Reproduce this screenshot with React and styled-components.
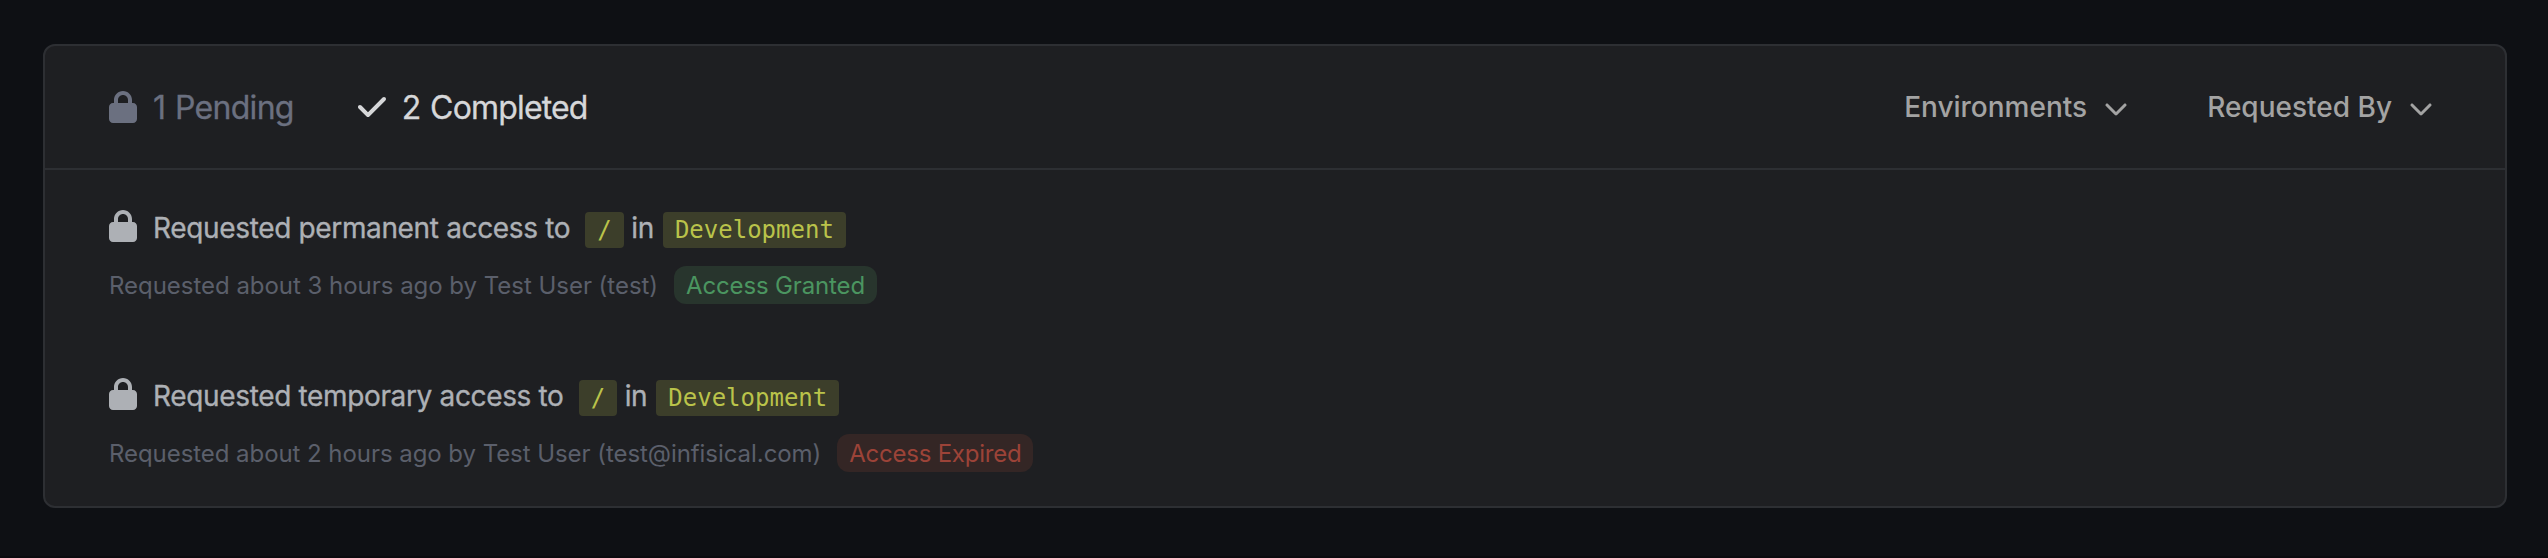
import React from "react";
import styled, { createGlobalStyle } from "styled-components";
import { FaLock, FaCheck, FaChevronDown } from "react-icons/fa6";

const GlobalStyle = createGlobalStyle`
  *, *::before, *::after { box-sizing: border-box; }
  body {
    margin: 0;
    background: #0e1014;
    font-family: Inter, "Liberation Sans", sans-serif;
  }
`;

const Page = styled.main`
  height: 558px;
  padding: 44px 41px 48px 43px;
  border-bottom: 2px solid #0b0b0f;
`;

const Card = styled.section`
  height: 464px;
  border: 2px solid #2d2f33;
  border-radius: 12px;
  background: #1e1f22;
  overflow: hidden;
`;

const Header = styled.header`
  display: flex;
  align-items: center;
  height: 124px;
  padding: 0 72px 0 64px;
  border-bottom: 2px solid #2d2f33;
`;

const Tab = styled.button`
  display: flex;
  align-items: center;
  gap: 16px;
  margin: 0 64px 0 0;
  padding: 0;
  border: 0;
  background: none;
  font: 400 32px/47px Inter, "Liberation Sans", sans-serif;
  letter-spacing: ${(p) => p.$tracking};
  word-spacing: 1.5px;
  white-space: nowrap;
  color: ${(p) => (p.$active ? "#d6d7d9" : "#6b7080")};
  svg { width: 28px; height: 32px; flex: none; }
  span { padding-top: 1px; -webkit-text-stroke: 0.3px currentColor; }
`;

const Filters = styled.div`
  display: flex;
  gap: 79px;
  margin-left: auto;
`;

const Filter = styled.button`
  display: flex;
  align-items: center;
  gap: 17px;
  padding: 0;
  border: 0;
  background: none;
  font: 500 28px/40px Inter, "Liberation Sans", sans-serif;
  white-space: nowrap;
  color: #a3a3a3;
  svg { width: 24px; height: 24px; flex: none; margin-top: 1px; }
`;

const List = styled.ul`
  margin: 0;
  padding: 0;
  list-style: none;
`;

const Request = styled.li`
  height: 168px;
  padding: 38px 64px 0;
`;

const Title = styled.div`
  display: flex;
  align-items: center;
  height: 40px;
  font-size: 28px;
  line-height: 40px;
  letter-spacing: -0.35px;
  white-space: nowrap;
  color: #adb0b5;
  svg { width: 28px; height: 32px; flex: none; margin: 0 16px 4px 0; }
  span { -webkit-text-stroke: 0.35px currentColor; }
`;

const Chip = styled.code`
  height: 36px;
  margin: 4px 7.5px 0 ${(p) => (p.$path ? "15.2px" : "9px")};
  padding: 0 12px;
  border-radius: 4px;
  background: #3c3e2a;
  color: #bac34a;
  font: 400 24px/36px "DejaVu Sans Mono", monospace;
  letter-spacing: 0;
`;

const Meta = styled.div`
  display: flex;
  align-items: flex-start;
  height: 38px;
  margin-top: 18px;
  font-size: 24px;
  line-height: 39px;
  letter-spacing: ${(p) => p.$tracking};
  white-space: nowrap;
  color: #5b5f6b;
`;

const Status = styled.span`
  height: 38px;
  margin-left: 16px;
  padding: 0 12px;
  border-radius: 12px;
  letter-spacing: ${(p) => (p.$granted ? "-0.15px" : "-0.24px")};
  color: ${(p) => (p.$granted ? "#4b9560" : "#9c4338")};
  background: ${(p) => (p.$granted ? "#28352d" : "#342625")};
`;

const requests = [
  { kind: "permanent", when: "about 3 hours ago", by: "Test User (test)", granted: true, status: "Access Granted", tracking: "-0.03px" },
  { kind: "temporary", when: "about 2 hours ago", by: "Test User (test@infisical.com)", granted: false, status: "Access Expired", tracking: "-0.06px" },
];

export default function App() {
  return (
    <Page>
      <GlobalStyle />
      <Card>
        <Header>
          <Tab $tracking="-0.72px"><FaLock /><span>1 Pending</span></Tab>
          <Tab $tracking="-0.83px" $active><FaCheck /><span>2 Completed</span></Tab>
          <Filters>
            <Filter><span>Environments</span><FaChevronDown /></Filter>
            <Filter><span>Requested By</span><FaChevronDown /></Filter>
          </Filters>
        </Header>
        <List>
          {requests.map((r) => (
            <Request key={r.kind}>
              <Title>
                <FaLock />
                <span>Requested {r.kind} access to</span>
                <Chip $path>/</Chip>
                <span>in</span>
                <Chip>Development</Chip>
              </Title>
              <Meta $tracking={r.tracking}>
                <span>Requested {r.when} by {r.by}</span>
                <Status $granted={r.granted}>{r.status}</Status>
              </Meta>
            </Request>
          ))}
        </List>
      </Card>
    </Page>
  );
}
